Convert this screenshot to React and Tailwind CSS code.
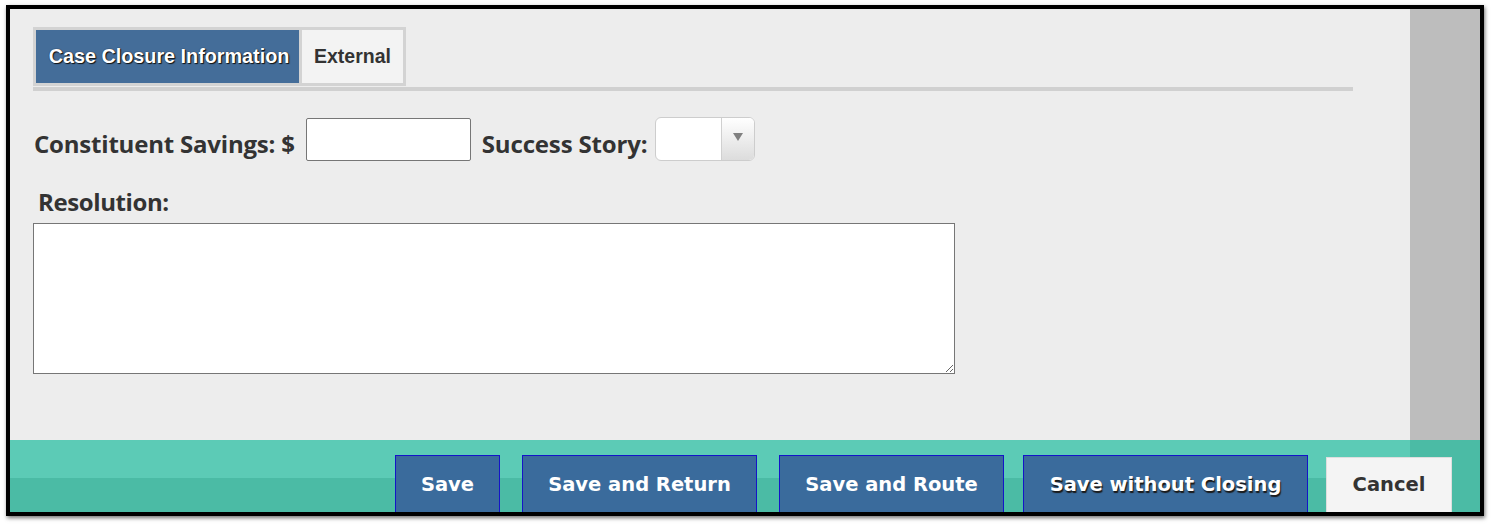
import React from "react";

const labelFont = { fontFamily: '"Open Sans", "Liberation Sans", sans-serif' };

const FooterButton = ({ children, className = "" }) => (
    <button
        className={`h-[62px] shrink-0 flex items-center justify-center pb-[2px] text-[19.5px] font-bold text-white bg-[#3a6b9c] border border-[#1414c8] ${className}`}
        style={{ fontFamily: '"DejaVu Sans", Verdana, sans-serif' }}
    >
        {children}
    </button>
);

export default function App() {
    return (
        <div className="min-h-screen bg-white pl-[6px] pt-[5px]">
            <div className="w-[1478px] h-[511px] border-4 border-black shadow-[1px_2px_4px_rgba(0,0,0,0.55)] flex flex-col overflow-hidden">
                {/* main area + scrollbar */}
                <div className="flex h-[431px]">
                    <div className="flex-1 bg-[#ededed] pl-[23px] pt-[18px] text-[#333]">
                        {/* tabs */}
                        <div className="inline-flex bg-[#d3d3d3] p-[3px] gap-[3px]">
                            <div
                                className="w-[263px] h-[53px] bg-[#446d99] flex items-center justify-center pl-[3px] text-[19.8px] font-bold text-white [text-shadow:1px_1px_1px_#111,0_0_1px_#111]"
                                style={{ fontFamily: '"Liberation Sans", Arial, sans-serif' }}
                            >
                                Case Closure Information
                            </div>
                            <div
                                className="w-[101px] h-[53px] bg-[#f3f3f3] flex items-center justify-center text-[19.5px] font-bold text-[#333]"
                                style={{ fontFamily: '"Liberation Sans", Arial, sans-serif' }}
                            >
                                External
                            </div>
                        </div>
                        <div className="mt-[1px] w-[1320px] h-[4px] bg-[#d0d0d0]" />

                        {/* savings row */}
                        <div className="mt-[26px] flex items-center h-[44px]" style={labelFont}>
                            <span className="pl-[1px] pt-[10px] text-[24px] font-bold tracking-[-0.2px]">Constituent Savings: $</span>
                            <input type="text" className="ml-[11px] w-[165px] h-[43px] bg-white border border-[#767676] rounded-[2px] outline-none" />
                            <span className="ml-[11px] pt-[10px] text-[24px] font-bold tracking-[-0.15px]">Success Story:</span>
                            <div className="ml-[7px] w-[100px] h-[44px] bg-white border border-[#cdcdcd] rounded-[6px] flex overflow-hidden">
                                <div className="flex-1" />
                                <div className="w-[33px] h-full border-l border-[#d0d0d0] bg-[linear-gradient(to_bottom,#ffffff,#dcdcdc)] flex justify-center pt-[15px]">
                                    <svg width="10" height="8" viewBox="0 0 10 8">
                                        <path d="M0 0 L10 0 L5 8 Z" fill="#808080" />
                                    </svg>
                                </div>
                            </div>
                        </div>

                        {/* resolution */}
                        <div className="mt-[26px] pl-[5px] text-[24px] font-bold leading-[30px] tracking-[-0.4px]" style={labelFont}>
                            Resolution:
                        </div>
                        <textarea className="block mt-[6px] w-[922px] h-[151px] bg-white border border-[#767676] outline-none" />
                    </div>
                    <div className="w-[70px] bg-[#bdbdbd]" />
                </div>

                {/* footer */}
                <div className="h-[72px] flex items-start pt-[15px] pl-[385px] overflow-hidden bg-[linear-gradient(to_right,transparent_1400px,#4bbba5_1400px),linear-gradient(to_bottom,#5ccbb6_38px,#4bbba5_38px)]">
                    <FooterButton className="w-[105px]">Save</FooterButton>
                    <FooterButton className="ml-[22px] w-[235px]">Save and Return</FooterButton>
                    <FooterButton className="ml-[22px] w-[225px]">Save and Route</FooterButton>
                    <FooterButton className="ml-[19px] w-[285px] border-[#1d3b5c] [text-shadow:1px_2px_1px_#1a1a1a]">Save without Closing</FooterButton>
                    <button
                        className="ml-[18px] mt-[2px] w-[126px] h-[60px] shrink-0 flex items-center justify-center pb-[4px] bg-[#f4f4f4] border border-[#dedede] text-[19.5px] font-bold text-[#333]"
                        style={{ fontFamily: '"DejaVu Sans", Verdana, sans-serif' }}
                    >
                        Cancel
                    </button>
                </div>
            </div>
        </div>
    );
}
